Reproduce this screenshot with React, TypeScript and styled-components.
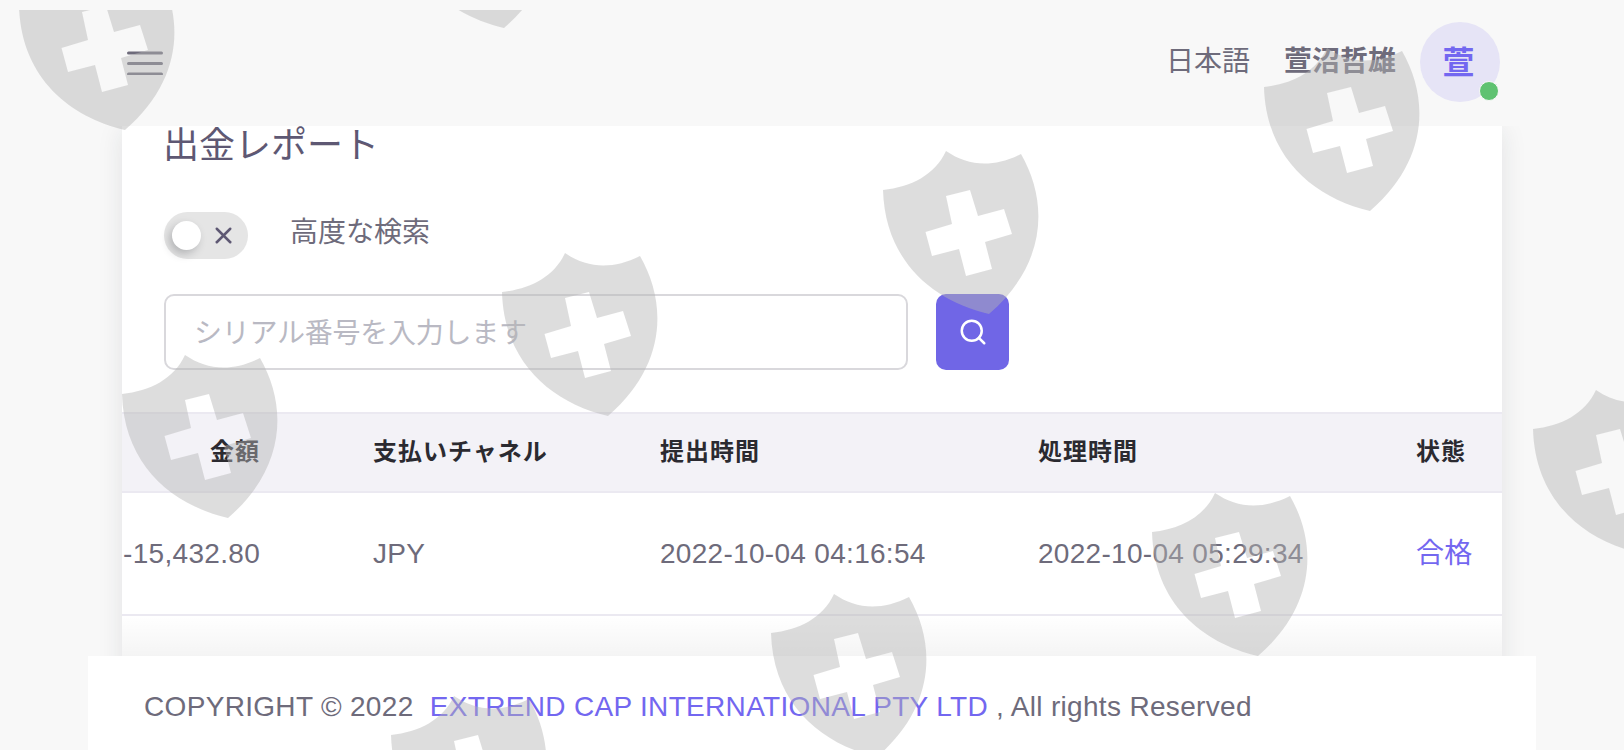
import React from "react";
import styled, { createGlobalStyle } from "styled-components";
import { Search, X } from "lucide-react";

const Global = createGlobalStyle`
  html, body { margin: 0; padding: 0; background: #f8f8f8; overflow: hidden; }
  body { font-family: "Liberation Sans", "Noto Sans CJK JP", sans-serif; color: #6e6b7b; }
  * { box-sizing: border-box; }
`;

const Page = styled.div`
  width: 1624px;
  height: 750px;
  display: flex;
  flex-direction: column;
  position: relative;
  overflow: hidden;
`;

const Header = styled.header`
  flex: none;
  height: 126px;
  padding: 0 124px 2px 127px;
  display: flex;
  align-items: center;
  justify-content: space-between;
  background: #f8f8f8;
`;

const MenuButton = styled.svg`
  width: 36px;
  height: 24px;
  display: block;
  color: #6e6b7b;
  margin-top: 1px;
`;

const UserArea = styled.div`
  display: flex;
  align-items: center;
`;

const Language = styled.span`
  font-size: 28px;
  line-height: 36px;
  color: #6e6b7b;
  margin-right: 34px;
`;

const UserName = styled.span`
  font-size: 28px;
  line-height: 36px;
  font-weight: 700;
  color: #6e6b7b;
  margin-right: 24px;
`;

const Avatar = styled.div`
  position: relative;
  width: 80px;
  height: 80px;
  border-radius: 50%;
  background: #e6e4f6;
  color: #7367f0;
  font-size: 32px;
  font-weight: 700;
  padding: 0 3px 4px 0;
  display: flex;
  align-items: center;
  justify-content: center;
`;

const OnlineDot = styled.span`
  position: absolute;
  right: 1px;
  bottom: 1px;
  width: 20px;
  height: 20px;
  border-radius: 50%;
  background: #5fc271;
  border: 1px solid #f8f8f8;
`;

const Main = styled.main`
  flex: 1;
  min-height: 0;
  margin: 0 88px;
  padding: 0 34px;
  overflow: hidden;
`;

const Card = styled.section`
  background: #fff;
  height: 620px;
  box-shadow: 0 4px 24px rgba(34, 41, 47, 0.1);
  display: flex;
  flex-direction: column;
`;

const CardBody = styled.div`
  padding: 0 42px;
`;

const Title = styled.h1`
  margin: 0 0 0 -1px;
  font-size: 36px;
  line-height: 40px;
  font-weight: 400;
  color: #5e5873;
`;

const ToggleRow = styled.div`
  margin-top: 46px;
  display: flex;
  align-items: center;
  gap: 42px;
`;

const Toggle = styled.div`
  width: 84px;
  height: 47px;
  border-radius: 24px;
  background: #e5e5e5;
  padding: 0 11px 0 8px;
  display: flex;
  align-items: center;
  justify-content: space-between;
  color: #5e5873;
`;

const Knob = styled.span`
  width: 29px;
  height: 29px;
  border-radius: 50%;
  background: #fff;
  box-shadow: -3px 4px 8px rgba(34, 41, 47, 0.25);
`;

const ToggleLabel = styled.span`
  font-size: 28px;
  line-height: 36px;
  color: #6e6b7b;
  padding-bottom: 6px;
`;

const SearchRow = styled.div`
  margin-top: 35px;
  display: flex;
  gap: 28px;
`;

const SearchInput = styled.input`
  width: 744px;
  height: 76px;
  border: 2px solid #d9d8dc;
  border-radius: 10px;
  padding: 3px 28px 0;
  font: inherit;
  font-size: 28px;
  letter-spacing: -0.25px;
  background: #fff;
  &::placeholder { color: #b9b9c3; opacity: 1; }
`;

const SearchButton = styled.button`
  width: 73px;
  height: 76px;
  border: 0;
  border-radius: 10px;
  background: #7066e6;
  color: #fff;
  display: flex;
  align-items: center;
  justify-content: center;
  padding: 0 0 1px 1px;
`;

const Table = styled.div`
  margin-top: 42px;
`;

const columns = "251px 287px 378px 378px 86px";

const HeadRow = styled.div`
  height: 81px;
  display: grid;
  grid-template-columns: ${columns};
  align-items: center;
  background: #f3f2f7;
  border-top: 2px solid #ebe9f1;
  border-bottom: 2px solid #ebe9f1;
  padding-bottom: 6px;
  font-size: 24px;
  font-weight: 700;
  letter-spacing: 1px;
  color: #2b2a30;
`;

const BodyRow = styled.div`
  height: 123px;
  display: grid;
  grid-template-columns: ${columns};
  align-items: center;
  border-bottom: 2px solid #ebe9f1;
  font-size: 28px;
  letter-spacing: 0.3px;
  color: #6e6b7b;
`;

const AmountCell = styled.div`
  text-align: right;
  padding-right: 113px;
  white-space: nowrap;
`;

const Cell = styled.div<{ $accent?: boolean }>`
  white-space: nowrap;
  color: ${(p) => (p.$accent ? "#7367f0" : "inherit")};
  padding-bottom: ${(p) => (p.$accent ? "5px" : "0")};
`;

const Footer = styled.footer`
  flex: none;
  position: relative;
  height: 94px;
  margin: 0 88px;
  padding: 0 0 0 56px;
  background: #fff;
  display: flex;
  align-items: flex-start;
  font-size: 28px;
  line-height: 102px;
  letter-spacing: 0.32px;
  white-space: pre;
  color: #6e6b7b;
  &::before {
    content: "";
    position: absolute;
    left: 34px;
    right: 34px;
    bottom: 100%;
    height: 40px;
    background: linear-gradient(to bottom, rgba(0, 0, 0, 0), rgba(0, 0, 0, 0.045));
  }
`;

const FooterLink = styled.span`
  color: #7367f0;
`;

const Watermark = styled.svg`
  position: absolute;
  left: 0;
  top: 10px;
  width: 1624px;
  height: 740px;
  pointer-events: none;
`;

const shieldPath =
  "M63 0C85 15 110 17 138 3C165 50 165 112 106 163C50 150 2 110 0 39C28 36 52 24 63 0Z" +
  "M63 45L87 39L95 65L121 58L129 83L102 91L109 118L83 125L76 98L49 105L42.5 81L69 73Z";

const shields: [number, number][] = [
  [19, -33],
  [398, -135],
  [1264, 48],
  [883, 151],
  [502, 253],
  [122, 355],
  [1533, 390],
  [1152, 493],
  [771, 594],
  [391, 696],
];

export default function App() {
  return (
    <Page>
      <Global />
      <Header>
        <MenuButton viewBox="0 0 36 24" fill="none" stroke="currentColor" strokeWidth="3" strokeLinecap="round">
          <path d="M1.5 2h33M1.5 12.5h33M1.5 23h33" />
        </MenuButton>
        <UserArea>
          <Language>日本語</Language>
          <UserName>萱沼哲雄</UserName>
          <Avatar>
            萱
            <OnlineDot />
          </Avatar>
        </UserArea>
      </Header>
      <Main>
        <Card>
          <CardBody>
            <Title>出金レポート</Title>
            <ToggleRow>
              <Toggle>
                <Knob />
                <X size={27} strokeWidth={2.2} />
              </Toggle>
              <ToggleLabel>高度な検索</ToggleLabel>
            </ToggleRow>
            <SearchRow>
              <SearchInput placeholder="シリアル番号を入力します" />
              <SearchButton aria-label="search">
                <Search size={30} strokeWidth={2} />
              </SearchButton>
            </SearchRow>
          </CardBody>
          <Table>
            <HeadRow>
              <AmountCell>金額</AmountCell>
              <Cell>支払いチャネル</Cell>
              <Cell>提出時間</Cell>
              <Cell>処理時間</Cell>
              <Cell>状態</Cell>
            </HeadRow>
            <BodyRow>
              <AmountCell>-15,432.80</AmountCell>
              <Cell>JPY</Cell>
              <Cell>2022-10-04 04:16:54</Cell>
              <Cell>2022-10-04 05:29:34</Cell>
              <Cell $accent>合格</Cell>
            </BodyRow>
          </Table>
        </Card>
      </Main>
      <Footer>
        {"COPYRIGHT © 2022  "}
        <FooterLink>EXTREND CAP INTERNATIONAL PTY LTD</FooterLink>
        {" , All rights Reserved"}
      </Footer>
      <Watermark viewBox="0 0 1624 740">
        {shields.map(([x, y]) => (
          <path
            key={`${x}-${y}`}
            d={shieldPath}
            transform={`translate(${x} ${y - 10})`}
            fill="rgb(180,180,180)"
            fillOpacity="0.46"
            fillRule="evenodd"
          />
        ))}
      </Watermark>
    </Page>
  );
}
